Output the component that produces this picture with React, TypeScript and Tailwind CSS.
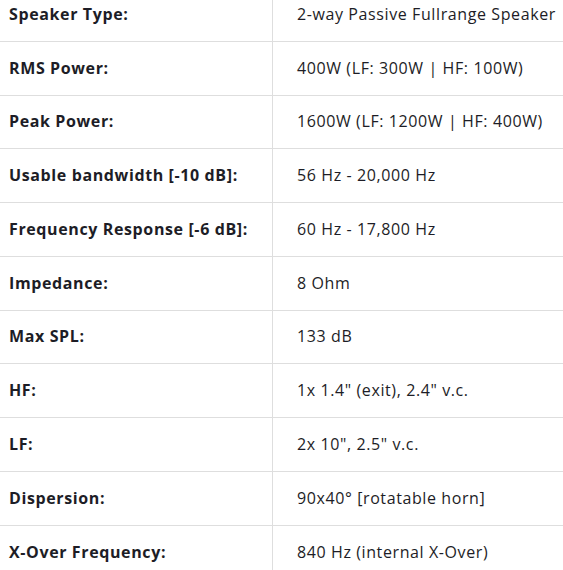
const specs: [string, string][] = [
  ['Speaker Type:', '2-way Passive Fullrange Speaker'],
  ['RMS Power:', '400W (LF: 300W | HF: 100W)'],
  ['Peak Power:', '1600W (LF: 1200W | HF: 400W)'],
  ['Usable bandwidth [-10 dB]:', '56 Hz - 20,000 Hz'],
  ['Frequency Response [-6 dB]:', '60 Hz - 17,800 Hz'],
  ['Impedance:', '8 Ohm'],
  ['Max SPL:', '133 dB'],
  ['HF:', '1x 1.4" (exit), 2.4" v.c.'],
  ['LF:', '2x 10", 2.5" v.c.'],
  ['Dispersion:', '90x40° [rotatable horn]'],
  ['X-Over Frequency:', '840 Hz (internal X-Over)'],
]

export default function App() {
  return (
    <div className="h-[570px] w-[563px] overflow-hidden bg-white font-['Open_Sans',sans-serif] text-[#1d1d26]">
      <div className="-mt-[12px]">
        {specs.map(([label, value]) => (
          <div
            key={label}
            className="grid h-[53.78px] grid-cols-[273px_1fr] border-b border-[#dedede]"
          >
            <div className="flex items-center border-r border-[#dedede] pb-[1px] pl-[9px] text-[16px] font-bold tracking-[0.62px]">
              {label}
            </div>
            <div className="flex items-center pb-[1px] pl-[24px] text-[16px] tracking-[0.6px]">
              {value}
            </div>
          </div>
        ))}
      </div>
    </div>
  )
}
